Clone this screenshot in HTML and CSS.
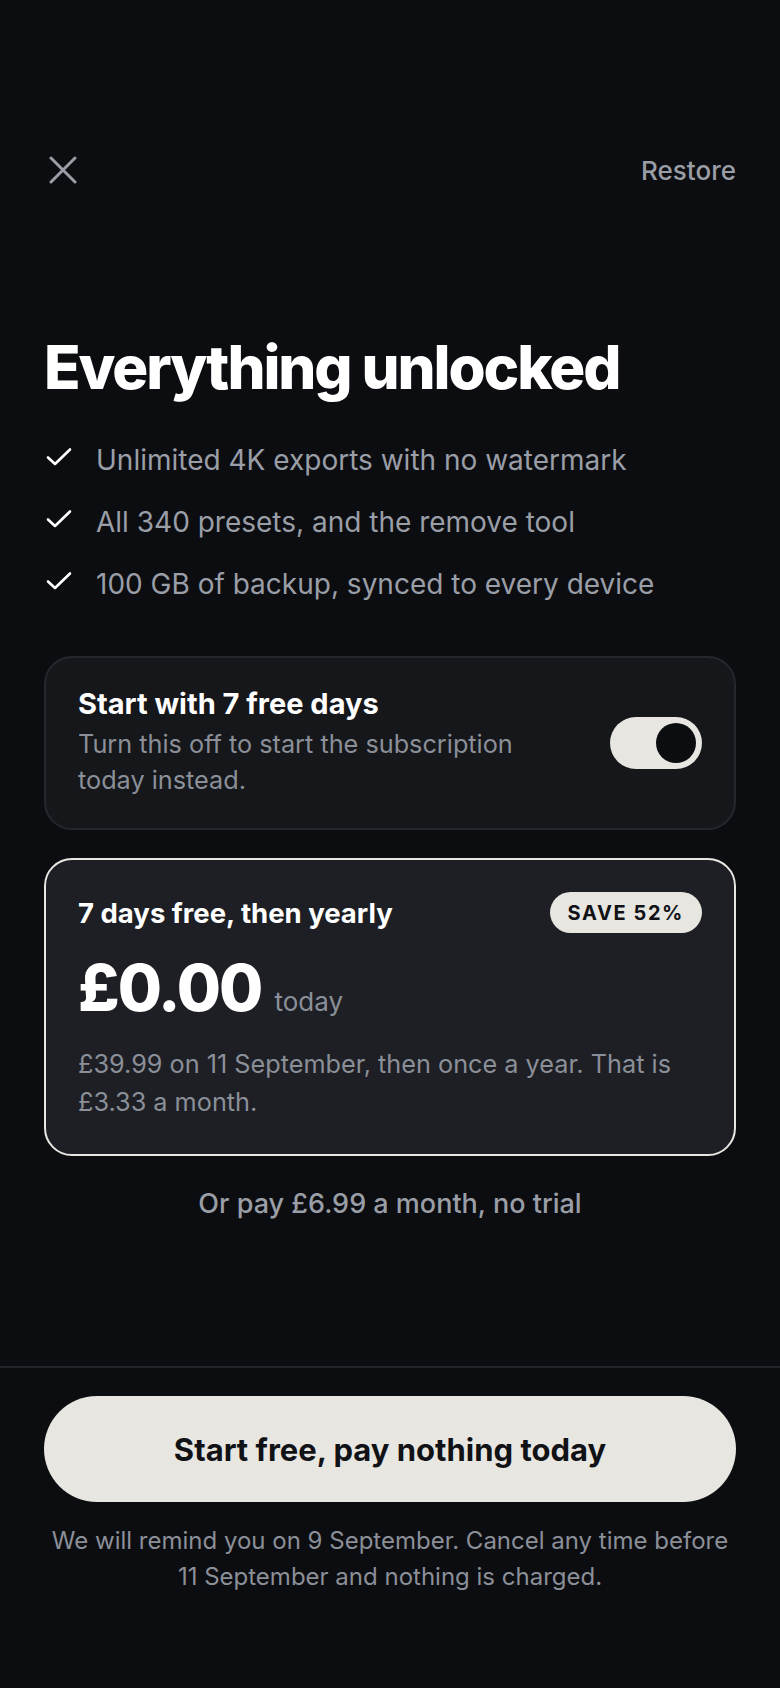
FILE: index.html
```html
<!DOCTYPE html>
<html lang="en">
<head>
<meta charset="utf-8">
<title>Everything unlocked</title>
<link rel="stylesheet" href="styles.css">
</head>
<body>
<div class="screen">
  <main class="main">
    <div class="topbar">
      <button class="close" aria-label="Close">
        <svg viewBox="0 0 28 28" width="28" height="28"><path d="M2 2L26 26M26 2L2 26" stroke="currentColor" stroke-width="3" stroke-linecap="round" fill="none"/></svg>
      </button>
      <span class="restore">Restore</span>
    </div>

    <h1 class="title">Everything unlocked</h1>

    <ul class="features">
      <li><svg class="check" viewBox="0 0 26 20" width="26" height="20"><path d="M2 10.5L9 17L24 2.5" stroke="currentColor" stroke-width="2.6" stroke-linecap="round" stroke-linejoin="round" fill="none"/></svg><span>Unlimited 4K exports with no watermark</span></li>
      <li><svg class="check" viewBox="0 0 26 20" width="26" height="20"><path d="M2 10.5L9 17L24 2.5" stroke="currentColor" stroke-width="2.6" stroke-linecap="round" stroke-linejoin="round" fill="none"/></svg><span>All 340 presets, and the remove tool</span></li>
      <li><svg class="check" viewBox="0 0 26 20" width="26" height="20"><path d="M2 10.5L9 17L24 2.5" stroke="currentColor" stroke-width="2.6" stroke-linecap="round" stroke-linejoin="round" fill="none"/></svg><span>100 GB of backup, synced to every device</span></li>
    </ul>

    <section class="trial-card">
      <div class="trial-text">
        <div class="card-title trial-title">Start with 7 free days</div>
        <div class="trial-sub">Turn this off to start the subscription today instead.</div>
      </div>
      <div class="toggle" role="switch" aria-checked="true"><span class="knob"></span></div>
    </section>

    <section class="plan-card">
      <div class="plan-head">
        <div class="card-title">7 days free, then yearly</div>
        <span class="badge">SAVE 52%</span>
      </div>
      <div class="price-row">
        <span class="price">£0.00</span>
        <span class="price-note">today</span>
      </div>
      <p class="plan-desc">£39.99 on 11 September, then once a year. That is £3.33 a month.</p>
    </section>

    <p class="alt">Or pay £6.99 a month, no trial</p>
  </main>

  <footer class="footer">
    <button class="cta">Start free, pay nothing today</button>
    <p class="note">We will remind you on 9 September. Cancel any time before 11 September and nothing is charged.</p>
  </footer>
</div>
</body>
</html>
```

FILE: styles.css
```css
* { box-sizing: border-box; }

html, body {
  margin: 0;
  padding: 0;
  background: #0c0d11;
}

body {
  font-family: Inter, "Noto Sans", "Liberation Sans", sans-serif;
  color: #ffffff;
}

.screen {
  width: 780px;
  height: 1688px;
  display: flex;
  flex-direction: column;
  background: #0c0d11;
}

.main {
  flex: 1;
  padding: 148px 44px 0;
  display: flex;
  flex-direction: column;
}

.topbar {
  height: 44px;
  display: flex;
  align-items: center;
  justify-content: space-between;
}

.close {
  background: none;
  border: 0;
  padding: 0;
  margin-left: 5px;
  width: 28px;
  height: 28px;
  color: #9a9ea7;
  display: flex;
}

.restore {
  font-size: 26px;
  font-weight: 500;
  color: #9a9ea7;
}

.title {
  margin: 142px 0 0;
  font-size: 60px;
  line-height: 66px;
  font-weight: 800;
  letter-spacing: -0.035em;
  color: #ffffff;
}

.features {
  list-style: none;
  margin: 40px 0 0;
  padding: 0;
  display: flex;
  flex-direction: column;
  gap: 22px;
}

.features li {
  display: flex;
  align-items: center;
  gap: 24px;
  font-size: 28px;
  line-height: 40px;
  color: #9a9ea7;
}

.check {
  color: #ffffff;
  flex: none;
  margin-left: 2px;
  margin-top: -6px;
}

.trial-card {
  margin-top: 52px;
  border: 2px solid #25272d;
  background: #15171b;
  border-radius: 28px;
  padding: 30px 32px 30px 32px;
  display: flex;
  align-items: center;
  justify-content: space-between;
  gap: 24px;
}

.trial-text {
  width: 470px;
}

.card-title {
  font-size: 27.5px;
  line-height: 32px;
  font-weight: 700;
  color: #ffffff;
}

.trial-title {
  font-size: 29px;
}

.trial-sub {
  margin-top: 6px;
  font-size: 25.25px;
  line-height: 36px;
  color: #8b8f98;
}

.toggle {
  width: 92px;
  height: 52px;
  border-radius: 26px;
  background: #e8e6e1;
  display: flex;
  align-items: center;
  justify-content: flex-end;
  padding: 0 6px;
  flex: none;
}

.knob {
  width: 40px;
  height: 40px;
  border-radius: 50%;
  background: #0c0d11;
}

.plan-card {
  margin-top: 28px;
  border: 2px solid #e8e6e1;
  background: #1d1f25;
  border-radius: 28px;
  padding: 32px 32px 33px;
}

.plan-head {
  display: flex;
  align-items: center;
  justify-content: space-between;
}

.badge {
  height: 41px;
  padding: 0 18px;
  border-radius: 21px;
  background: #e8e6e1;
  color: #111216;
  font-size: 20px;
  font-weight: 700;
  letter-spacing: 0.08em;
  display: flex;
  align-items: center;
}

.price-row {
  margin-top: 20px;
  display: flex;
  align-items: baseline;
  gap: 13px;
}

.price {
  font-size: 64px;
  line-height: 70px;
  font-weight: 800;
  letter-spacing: -0.03em;
  color: #ffffff;
}

.price-note {
  font-size: 26px;
  color: #8b8f98;
}

.plan-desc {
  margin: 22px 0 0;
  font-size: 25.25px;
  line-height: 38px;
  color: #8b8f98;
}

.alt {
  margin: 30px 0 0;
  text-align: center;
  font-size: 27px;
  line-height: 36px;
  font-weight: 500;
  color: #9a9ea7;
}

.footer {
  border-top: 2px solid #22242a;
  padding: 28px 44px 93px;
  display: flex;
  flex-direction: column;
  align-items: stretch;
}

.cta {
  height: 106px;
  border: 0;
  border-radius: 53px;
  background: #e8e6e1;
  color: #111216;
  font-family: inherit;
  font-size: 31px;
  font-weight: 700;
}

.note {
  margin: 21px 0 0;
  text-align: center;
  font-size: 24px;
  line-height: 36px;
  color: #8b8f98;
}
```
